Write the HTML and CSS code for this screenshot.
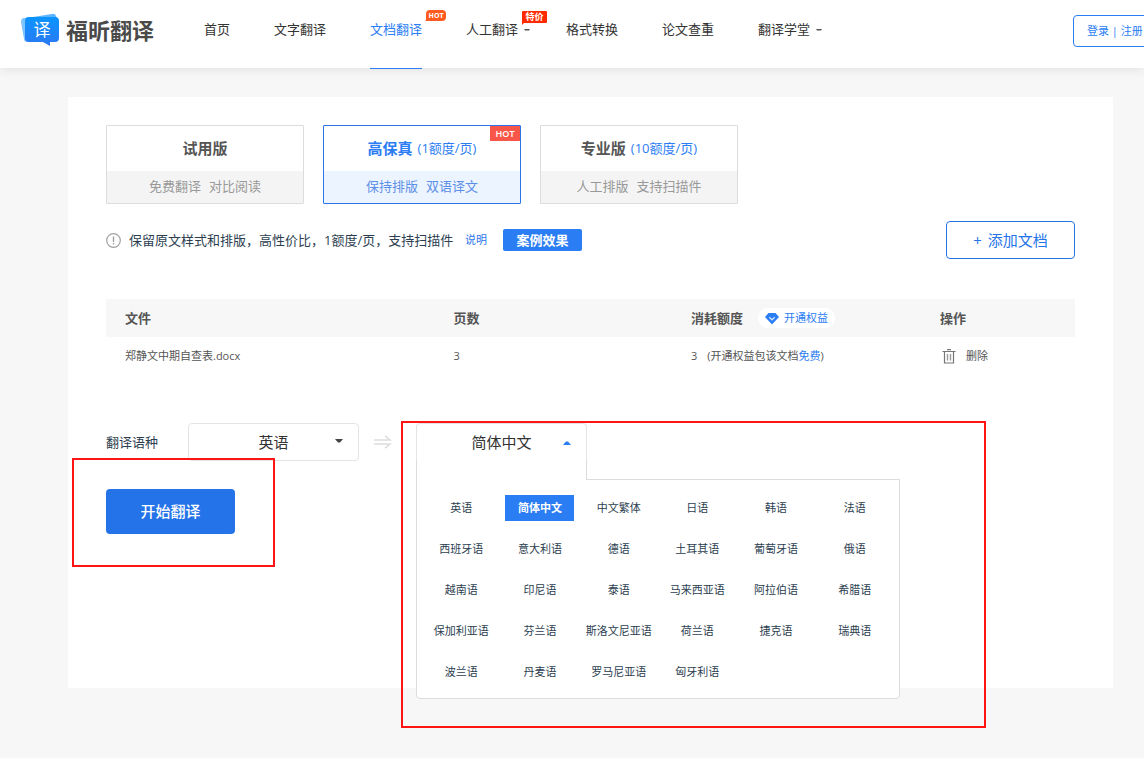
FILE: index.html
```html
<!DOCTYPE html>
<html lang="zh-CN">
<head>
<meta charset="utf-8">
<meta name="viewport" content="width=device-width, initial-scale=1">
<title>福昕翻译</title>
<link rel="stylesheet" href="styles.css">
</head>
<body>
<header class="header">
  <div class="header-inner">
    <a class="logo" href="#">
      <svg class="logo-mark" viewBox="0 0 40 34" aria-hidden="true">
        <defs><linearGradient id="lg" x1="0" y1="0" x2="0" y2="1"><stop offset="0" stop-color="#0b94ff"/><stop offset="1" stop-color="#2b78f3"/></linearGradient></defs>
        <path d="M4 5 12 4 8 29q-4 0-4-3L1 9q0-4 3-4z" fill="#7cc3ff"/>
        <path d="M13 4 32 1q3-1 4 2l1 4H12z" fill="#5ab4ff"/>
        <path d="M9 4h26q4 0 4 4v17q0 4-4 4h-5v4l-7-4H9q-4 0-4-4V8q0-4 4-4z" fill="url(#lg)"/>
        <text class="logo-glyph" x="22" y="23" text-anchor="middle">译</text>
      </svg>
      <span class="logo-name">福昕翻译</span>
    </a>
    <nav class="nav">
      <a class="nav-link" href="#">首页</a>
      <a class="nav-link" href="#">文字翻译</a>
      <a class="nav-link active" href="#">文档翻译<span class="tag tag-hot">HOT</span></a>
      <a class="nav-link has-menu" href="#">人工翻译<svg class="tick" viewBox="0 0 6 4" aria-hidden="true"><path d="M0 1h6L5 2.600H1z"/></svg><span class="tag tag-sale">特价</span></a>
      <a class="nav-link" href="#">格式转换</a>
      <a class="nav-link" href="#">论文查重</a>
      <a class="nav-link has-menu" href="#">翻译学堂<svg class="tick" viewBox="0 0 6 4" aria-hidden="true"><path d="M0 1h6L5 2.600H1z"/></svg></a>
    </nav>
    <button class="login" type="button">登录 | 注册</button>
  </div>
</header>

<main class="card">
  <div class="plans">
    <button class="plan" type="button" aria-pressed="false">
      <span class="plan-head"><b>试用版</b></span>
      <span class="plan-foot"><span>免费翻译</span><span>对比阅读</span></span>
    </button>
    <button class="plan selected" type="button" aria-pressed="true">
      <span class="plan-head"><b>高保真</b><span class="price">(1额度/页)</span></span>
      <span class="plan-foot"><span>保持排版</span><span>双语译文</span></span>
      <span class="plan-hot">HOT</span>
    </button>
    <button class="plan" type="button" aria-pressed="false">
      <span class="plan-head"><b>专业版</b><span class="price">(10额度/页)</span></span>
      <span class="plan-foot"><span>人工排版</span><span>支持扫描件</span></span>
    </button>
  </div>

  <div class="tip">
    <svg class="tip-icon" viewBox="0 0 15 15" aria-hidden="true"><circle cx="7.500" cy="7.500" r="6.800" fill="none" stroke="#a0a0a0" stroke-width="1.200"/><path d="M7.500 3.500v5.500M7.500 10v1.500" stroke="#a0a0a0" stroke-width="1.400"/></svg>
    <span class="tip-text">保留原文样式和排版，高性价比，1额度/页，支持扫描件</span>
    <a class="tip-link" href="#">说明</a>
    <button class="demo" type="button">案例效果</button>
    <button class="add" type="button"><span>+</span><span>添加文档</span></button>
  </div>

  <table class="files">
    <thead>
      <tr>
        <th class="col-file" scope="col">文件</th>
        <th class="col-pages" scope="col">页数</th>
        <th class="col-cost" scope="col"><div class="cell">消耗额度
          <a class="vip" href="#"><svg class="gem" viewBox="0 0 14 13" aria-hidden="true"><path d="M3.500 1h7L14 5 7 12.500 0 5z" fill="#2b7df3"/><path d="M4.300 5.300 7 7.800l2.700-2.500" fill="none" stroke="#cfe1ff" stroke-width="1.300"/></svg>开通权益</a></div></th>
        <th class="col-action" scope="col">操作</th>
      </tr>
    </thead>
    <tbody>
      <tr>
        <td>郑静文中期自查表.docx</td>
        <td>3</td>
        <td><div class="cell cost">3<span>(开通权益包该文档<a href="#">免费</a>)</span></div></td>
        <td><button class="delete" type="button"><svg class="trash" viewBox="0 0 14 15" aria-hidden="true"><path d="M.500 2.500h13M5 .700h4M2.500 2.500v11.500h9V2.500" fill="none" stroke="#777" stroke-width="1.200"/><path d="M5.500 5v6.500M8.500 5v6.500" stroke="#999" stroke-width="1.400"/></svg>删除</button></td>
      </tr>
    </tbody>
  </table>

  <div class="langs">
    <label class="langs-label" for="source">翻译语种</label>
    <div class="source">
      <select id="source"><option>英语</option><option>简体中文</option></select>
      <svg class="caret" viewBox="0 0 8 4" aria-hidden="true"><path d="M0 0h8L5 3.500H3z" fill="#444"/></svg>
    </div>
    <svg class="arrow" viewBox="0 0 18 14" aria-hidden="true"><path d="M0 5h16L11 .800M0 9h16l-5 4.200" fill="none" stroke="#ddd" stroke-width="1.600"/></svg>
    <div class="target">
      <button class="trigger" type="button" aria-expanded="true">简体中文</button>
      <svg class="caret caret-up" viewBox="0 0 8 4" aria-hidden="true"><path d="M0 4h8L5 .500H3z" fill="#2b7df3"/></svg>
      <div class="menu">
        <button type="button">英语</button><button class="chosen" type="button">简体中文</button><button type="button">中文繁体</button><button type="button">日语</button><button type="button">韩语</button><button type="button">法语</button>
        <button type="button">西班牙语</button><button type="button">意大利语</button><button type="button">德语</button><button type="button">土耳其语</button><button type="button">葡萄牙语</button><button type="button">俄语</button>
        <button type="button">越南语</button><button type="button">印尼语</button><button type="button">泰语</button><button type="button">马来西亚语</button><button type="button">阿拉伯语</button><button type="button">希腊语</button>
        <button type="button">保加利亚语</button><button type="button">芬兰语</button><button type="button">斯洛文尼亚语</button><button type="button">荷兰语</button><button type="button">捷克语</button><button type="button">瑞典语</button>
        <button type="button">波兰语</button><button type="button">丹麦语</button><button type="button">罗马尼亚语</button><button type="button">匈牙利语</button>
      </div>
      <div class="mark mark-target"></div>
    </div>
  </div>

  <div class="start-wrap">
    <button class="start" type="button">开始翻译</button>
    <div class="mark mark-start"></div>
  </div>
</main>
</body>
</html>
```
FILE: styles.css
```css
*, *::before, *::after { box-sizing: border-box; }

body {
  margin: 0;
  min-height: 100vh;
  overflow-x: hidden;
  background: #f7f7f7;
  color: #333;
  font-family: "Open Sans", "Noto Sans CJK SC", sans-serif;
  font-size: 13px;
  line-height: 20px;
}

a { color: inherit; text-decoration: none; }

button,
select {
  margin: 0;
  padding: 0;
  border: 0;
  background: none;
  color: inherit;
  font: inherit;
  cursor: pointer;
}

svg { display: block; flex: none; }

/* Header */
.header {
  position: relative;
  background: #fff;
  box-shadow: 0 2px 10px rgba(0, 0, 0, 0.09);
}

.header-inner {
  display: flex;
  align-items: center;
  min-width: 1184px;
  height: 68px;
  padding: 0 20px;
}

.logo {
  display: flex;
  align-items: center;
  gap: 6px;
  width: 184px;
  padding-bottom: 8px;
}

.logo-mark { width: 40px; height: 34px; }
.logo-glyph { fill: #fff; font-size: 17px; }

.logo-name {
  color: #4a4a4a;
  font-size: 22px;
  font-weight: 700;
  line-height: 32px;
  white-space: nowrap;
}

.nav { display: flex; gap: 44px; }

.nav-link {
  position: relative;
  display: flex;
  align-items: center;
  height: 69px;
  padding-bottom: 10px;
  border-bottom: 1px solid transparent;
  white-space: nowrap;
}

.nav-link.active { border-color: #2b7df3; color: #2b7df3; }
.has-menu { padding-right: 2px; }
.tick { width: 6px; height: 4px; margin: 2px -10px 0 6px; fill: #555; }

.tag {
  position: absolute;
  color: #fff;
  font-weight: 700;
  text-align: center;
}

.tag::after {
  content: "";
  position: absolute;
  left: 0;
  bottom: -2px;
  border-top: 4px solid;
  border-right: 4px solid transparent;
}

.tag-hot {
  top: 10px;
  left: 56px;
  width: 20px;
  border-radius: 4px 4px 4px 0;
  background: #ff5a1f;
  font-size: 7px;
  line-height: 11px;
}

.tag-hot::after {
  left: -1px;
  bottom: 0;
  border-top: 0;
  border-right: 3px solid #ff5a1f;
  border-top: 3px solid transparent;
}

.tag-sale {
  top: 11px;
  left: 56px;
  width: 25px;
  border-radius: 1px;
  background: #ff2a00;
  font-size: 9px;
  line-height: 12px;
}

.tag-sale::after { border-top-color: #ff2a00; }

.login {
  width: 91px;
  height: 32px;
  margin: 0 0 6px auto;
  padding-left: 13px;
  border: 1px solid #2b7df3;
  border-radius: 4px;
  color: #2b7df3;
  font-size: 11px;
  text-align: left;
  white-space: nowrap;
}

/* Card */
.card {
  margin: 29px 31px 70px 68px;
  padding: 28px 38px 154px;
  background: #fff;
}

.plans { display: flex; gap: 19px; }

.plan {
  position: relative;
  width: 198px;
  border: 1px solid #dcdcdc;
  border-radius: 1px;
  color: #999;
}

.plan-head,
.plan-foot {
  display: flex;
  align-items: center;
  justify-content: center;
  padding-bottom: 2px;
}

.plan-head { gap: 5px; height: 45px; color: #555; }
.plan-head b { font-size: 15px; }
.price { color: #2b7df3; }
.plan-foot { gap: 8px; height: 32px; background: #f4f4f4; }
.plan.selected { border-color: #2b73e8; color: #5c8fe6; }
.selected b { color: #2b7df3; }
.selected .plan-foot { background: #ecf4ff; }

.plan-hot {
  position: absolute;
  top: 0;
  right: 0;
  width: 30px;
  background: #f9564a;
  color: #fff;
  font-size: 9px;
  font-weight: 600;
  line-height: 15px;
}

.tip {
  display: flex;
  align-items: center;
  height: 38px;
  margin-top: 17px;
}

.tip-icon { width: 15px; height: 15px; margin-right: 8px; }
.tip-text { min-width: 336px; color: #2c3e50; white-space: nowrap; }
.tip-link { color: #2b73e8; font-size: 11px; white-space: nowrap; }

.demo {
  width: 79px;
  height: 22px;
  margin-left: 16px;
  border-radius: 2px;
  background: #2b7df3;
  color: #fff;
  font-weight: 700;
}

.add {
  display: flex;
  align-items: center;
  justify-content: center;
  gap: 6px;
  width: 129px;
  height: 38px;
  margin-left: auto;
  border: 1px solid #2473e8;
  border-radius: 4px;
  color: #2473e8;
  font-size: 15px;
}

/* File table */
.files {
  width: 100%;
  margin-top: 40px;
  border-collapse: collapse;
  table-layout: fixed;
  color: #555;
}

.files th,
.files td {
  height: 38px;
  padding: 0 0 0 19px;
  text-align: left;
  white-space: nowrap;
}

.files th { background: #f7f7f7; }
.files td { font-size: 11px; }
.col-file { width: 33.9%; }
.col-pages { width: 24.5%; }
.col-cost { width: 25.7%; }
.cell { display: flex; align-items: center; gap: 15px; }
.cost { gap: 10px; }
.cost a { color: #2b7df3; }

.vip {
  display: flex;
  align-items: center;
  gap: 5px;
  padding: 0 7px;
  border-radius: 10px;
  background: #fff;
  color: #2b7df3;
  font-size: 11px;
  font-weight: 400;
}

.gem { width: 14px; height: 13px; }
.delete { display: flex; align-items: center; gap: 10px; padding-left: 2px; }
.trash { width: 14px; height: 15px; }

/* Languages */
.langs {
  display: flex;
  align-items: center;
  height: 38px;
  margin-top: 48px;
}

.langs-label { width: 82px; color: #2c3e50; }
.source, .target { position: relative; width: 171px; height: 38px; font-size: 15px; }

.source select {
  width: 100%;
  height: 100%;
  border: 1px solid #e4e4e4;
  border-radius: 4px;
  appearance: none;
  text-align: center;
  text-align-last: center;
}

.caret {
  position: absolute;
  top: 16px;
  right: 16px;
  width: 8px;
  height: 4px;
  pointer-events: none;
}

.caret-up { top: 18px; }

.arrow { width: 18px; height: 14px; margin: 0 24px 0 15px; }

.trigger {
  width: 100%;
  height: 38px;
  padding-bottom: 2px;
  border: solid #e4e4e4;
  border-width: 1px 1px 0;
  border-radius: 4px 4px 0 0;
}

/* Joins the open trigger to its menu */
.target::after {
  content: "";
  position: absolute;
  top: 38px;
  left: 0;
  z-index: 2;
  width: 100%;
  height: 19px;
  border: solid #dcdcdc;
  border-width: 0 1px;
  background: #fff;
}

.menu {
  position: absolute;
  top: 56px;
  left: 0;
  z-index: 1;
  display: grid;
  grid-template-columns: repeat(6, 1fr);
  grid-auto-rows: 41px;
  place-items: center;
  width: 484px;
  padding: 7px 5px 6px;
  border: 1px solid #dcdcdc;
  border-radius: 0 0 4px 4px;
  background: #fff;
  color: #2c3e50;
  font-size: 11px;
}

.menu button { height: 26px; white-space: nowrap; }
.menu .chosen { width: 69px; background: #2b7df3; color: #fff; font-weight: 700; }

.start-wrap { position: relative; width: 129px; margin-top: 28px; }

.start {
  width: 100%;
  height: 45px;
  padding-bottom: 2px;
  border-radius: 4px;
  background: #2473e8;
  color: #fff;
  font-size: 15px;
  font-weight: 500;
}

/* Highlight frames */
.mark {
  position: absolute;
  z-index: 3;
  border: 2px solid #ff1414;
  pointer-events: none;
}

.mark-target { top: -2px; left: -15px; width: 585px; height: 307px; }
.mark-start { inset: -31px -40px -33px -34px; }
```
